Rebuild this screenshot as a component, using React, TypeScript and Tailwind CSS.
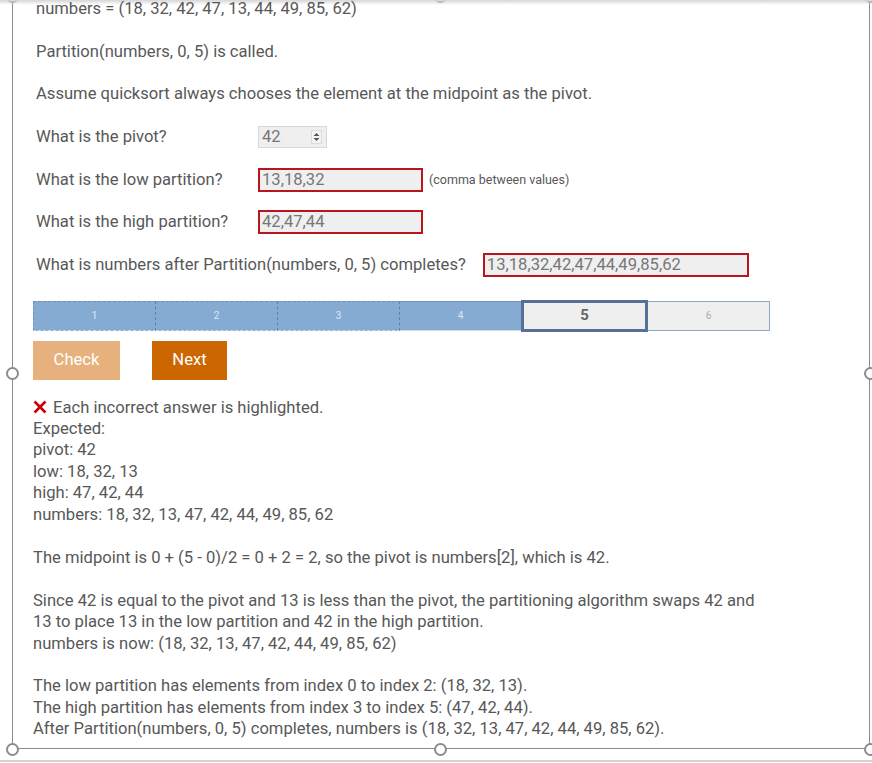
import React from "react";

const LH = "leading-[21.4px]";

function Handle({ x, y }: { x: number; y: number }) {
  return (
    <div
      className="absolute w-[13px] h-[13px] rounded-full border-2 border-[#8c8c8c] bg-white"
      style={{ left: x - 6.5, top: y - 6.5 }}
    />
  );
}

function Spinner() {
  return (
    <svg width="11" height="14" viewBox="0 0 11 14">
      <rect x="0.5" y="0.5" width="10" height="13" fill="#f4f4f4" stroke="#dcdcdc" />
      <path d="M2.5 6 L5.5 3 L8.5 6 Z" fill="#555" />
      <path d="M2.5 8 L5.5 11 L8.5 8 Z" fill="#555" />
    </svg>
  );
}

export default function App() {
  const font = { fontFamily: "Roboto, 'Liberation Sans', sans-serif" };
  return (
    <div
      className="relative w-[872px] h-[763px] overflow-hidden bg-white text-[#585858] text-[16.6px]"
      style={font}
    >
      {/* selection frame */}
      <div className="absolute left-[12px] top-[-4px] w-[858px] h-[753px] border border-[#8c8c8c]" />
      <Handle x={12} y={-4} />
      <Handle x={440} y={-4} />
      <Handle x={870} y={-4} />
      <Handle x={12} y={373} />
      <Handle x={870} y={373} />
      <Handle x={12} y={749} />
      <Handle x={440} y={749} />
      <Handle x={870} y={749} />
      <div className="absolute left-0 top-0 w-full h-[5px] bg-gradient-to-b from-[#d6d6d6] to-transparent" />
      <div className="absolute left-0 top-[760px] w-full h-[2px] bg-[#d2d2d2]" />

      <div className="relative pl-[33px] mt-[-2px]">
        {/* question */}
        <div className="pl-[3px] flex flex-col gap-[21.3px]">
          <div className={LH}>numbers = (18, 32, 42, 47, 13, 44, 49, 85, 62)</div>
          <div className={LH}>Partition(numbers, 0, 5) is called.</div>
          <div className={LH}>Assume quicksort always chooses the element at the midpoint as the pivot.</div>
          <div className={`flex items-center h-[21.4px] ${LH}`}>
            <div className="w-[222px]">What is the pivot?</div>
            <div className="flex items-center justify-between w-[69px] h-[22px] border border-[#d8d8d8] bg-[#efefef] pl-[3px] pr-[4px] text-[#777]">
              <span>42</span>
              <Spinner />
            </div>
          </div>
          <div className={`flex items-center h-[21.4px] ${LH}`}>
            <div className="w-[222px]">What is the low partition?</div>
            <div className="flex items-center w-[165px] h-[24px] border-2 border-[#b8161c] bg-[#efefef] pl-[2px] text-[#777]">
              13,18,32
            </div>
            <div className="ml-[6px] text-[12.5px]">(comma between values)</div>
          </div>
          <div className={`flex items-center h-[21.4px] ${LH}`}>
            <div className="w-[222px]">What is the high partition?</div>
            <div className="flex items-center w-[165px] h-[24px] border-2 border-[#b8161c] bg-[#efefef] pl-[2px] text-[#777]">
              42,47,44
            </div>
          </div>
          <div className={`flex items-center h-[21.4px] ${LH}`}>
            <div className="mr-[17px]">What is numbers after Partition(numbers, 0, 5) completes?</div>
            <div className="flex items-center w-[266px] h-[24px] border-2 border-[#b8161c] bg-[#efefef] pl-[2px] text-[#777]">
              13,18,32,42,47,44,49,85,62
            </div>
          </div>
        </div>

        {/* progress bar */}
        <div className="mt-[25px] flex w-[737px] h-[30px] items-stretch">
          {[1, 2, 3, 4].map((n) => (
            <div
              key={n}
              className={`flex-1 flex items-center justify-center bg-[#86abd3] border-t border-b border-t-[#6f93bd] border-b-[#c9d9ea] text-[10px] text-[#dbe7f3] ${
                n < 4 ? "border-r border-r-[#5d80aa] border-dashed" : ""
              } ${n === 1 ? "border-l border-l-[#6f93bd]" : ""}`}
            >
              {n}
            </div>
          ))}
          <div className="flex-1 flex items-center justify-center -my-[1px] bg-[#efefef] border-[3px] border-[#56709a] text-[15px] font-bold text-[#666]">
            5
          </div>
          <div className="flex-1 flex items-center justify-center bg-[#efefef] border border-l-0 border-[#8ea6c6] text-[10px] text-[#aaa]">
            6
          </div>
        </div>

        {/* buttons */}
        <div className="mt-[10px] flex gap-[32px]">
          <div className="w-[87px] h-[39px] flex items-center justify-center bg-[#e7b17e] text-white">Check</div>
          <div className="w-[75px] h-[39px] flex items-center justify-center bg-[#cc6600] text-white">Next</div>
        </div>

        {/* feedback */}
        <div className="mt-[17px] leading-[21.45px]">
          <div className="flex items-center">
            <svg width="14" height="14" viewBox="0 0 14 14" className="mr-[6px]">
              <path d="M1.5 1.5 L12.5 12.5 M12.5 1.5 L1.5 12.5" stroke="#cc0000" strokeWidth="2.6" />
            </svg>
            <span>Each incorrect answer is highlighted.</span>
          </div>
          <div>Expected:</div>
          <div>pivot: 42</div>
          <div>low: 18, 32, 13</div>
          <div>high: 47, 42, 44</div>
          <div>numbers: 18, 32, 13, 47, 42, 44, 49, 85, 62</div>
          <div className="h-[21.45px]" />
          <div>The midpoint is 0 + (5 - 0)/2 = 0 + 2 = 2, so the pivot is numbers[2], which is 42.</div>
          <div className="h-[21.45px]" />
          <div>Since 42 is equal to the pivot and 13 is less than the pivot, the partitioning algorithm swaps 42 and</div>
          <div>13 to place 13 in the low partition and 42 in the high partition.</div>
          <div>numbers is now: (18, 32, 13, 47, 42, 44, 49, 85, 62)</div>
          <div className="h-[21.45px]" />
          <div>The low partition has elements from index 0 to index 2: (18, 32, 13).</div>
          <div>The high partition has elements from index 3 to index 5: (47, 42, 44).</div>
          <div>After Partition(numbers, 0, 5) completes, numbers is (18, 32, 13, 47, 42, 44, 49, 85, 62).</div>
        </div>
      </div>
    </div>
  );
}
